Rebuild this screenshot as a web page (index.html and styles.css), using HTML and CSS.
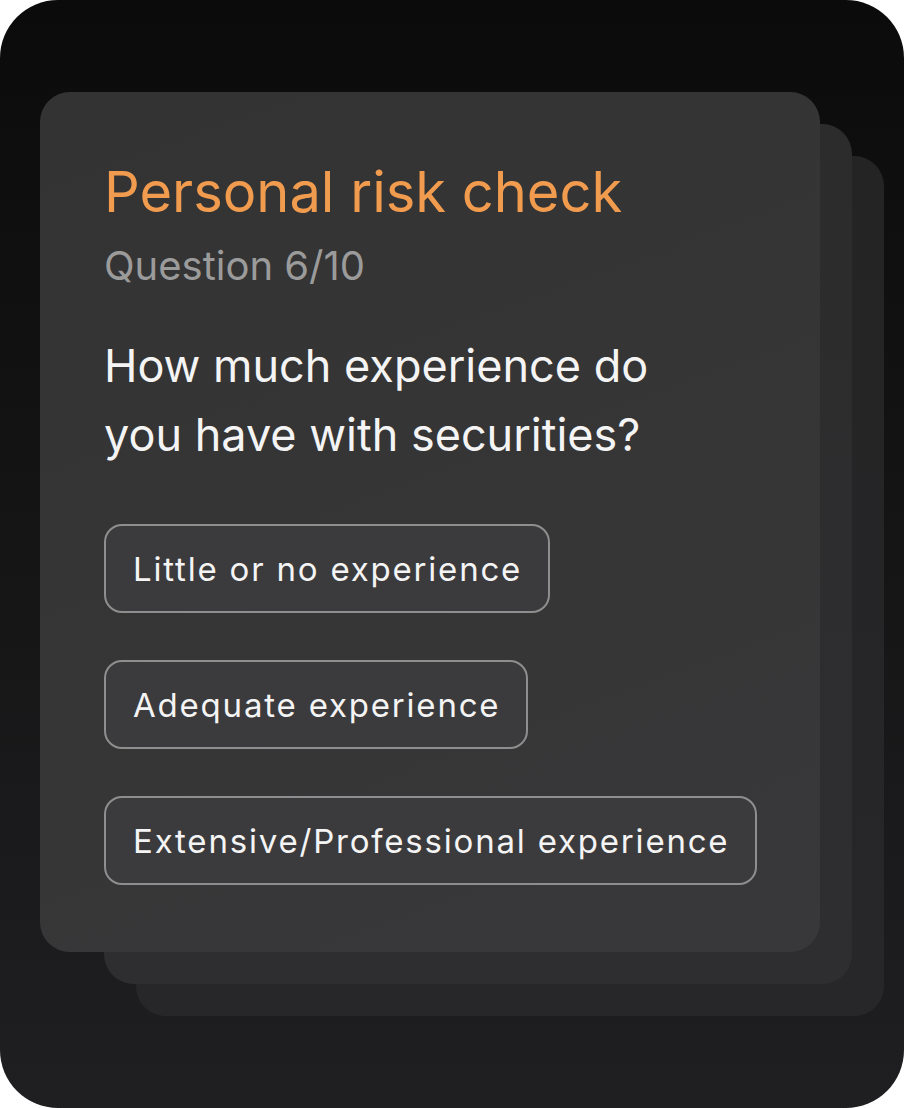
FILE: index.html
```html
<!DOCTYPE html>
<html lang="en">
<head>
<meta charset="utf-8">
<title>Personal risk check</title>
<link rel="stylesheet" href="styles.css">
</head>
<body>
<div class="frame">
  <div class="stack">
    <div class="card card-back card-back-2"></div>
    <div class="card card-back card-back-1"></div>
    <div class="card card-front">
      <h1 class="title">Personal risk check</h1>
      <p class="counter">Question 6/10</p>
      <p class="question">How much experience do<br>you have with securities?</p>
      <div class="options">
        <button class="option">Little or no experience</button>
        <button class="option">Adequate experience</button>
        <button class="option">Extensive/Professional experience</button>
      </div>
    </div>
  </div>
</div>
</body>
</html>
```

FILE: styles.css
```css
* { box-sizing: border-box; }
html, body { margin: 0; padding: 0; background: #ffffff; }
body { font-family: Inter, "Noto Sans", sans-serif; }

.frame {
  width: 904px;
  height: 1108px;
  border-radius: 58px;
  background: linear-gradient(180deg, #0b0b0b 0%, #141415 45%, #1f1f21 100%);
  padding: 92px 0 0 40px;
  overflow: hidden;
}

.stack {
  display: grid;
  grid-template-columns: max-content;
}

.card {
  grid-area: 1 / 1;
  border-radius: 30px;
}

.card-back { width: 748px; height: 860px; }
.card-back-1 { margin: 32px 0 0 64px; background: linear-gradient(180deg, #2c2c2d, #2e2e30); }
.card-back-2 { margin: 64px 0 0 96px; background: linear-gradient(180deg, #242425, #272729); }

.card-front {
  width: 780px;
  height: 860px;
  background: linear-gradient(160deg, #333333 0%, #363637 60%, #38383a 100%);
  padding: 67px 0 0 64px;
}

.title {
  margin: 0;
  font-size: 56px;
  line-height: 66px;
  font-weight: 400;
  color: #f19b4f;
}

.counter {
  margin: 17px 0 0;
  font-size: 40px;
  line-height: 48px;
  color: #9b9b9b;
}

.question {
  margin: 41px 0 0;
  font-size: 45px;
  line-height: 69px;
  color: #f4f4f4;
}

.options {
  margin-top: 55px;
  display: flex;
  flex-direction: column;
  align-items: flex-start;
  gap: 47px;
}

.option {
  font-family: Inter, "Noto Sans", sans-serif;
  font-size: 33px;
  letter-spacing: 1.8px;
  line-height: 40px;
  color: #f4f4f4;
  background: #3b3b3d;
  border: 2px solid #8e8e8e;
  border-radius: 18px;
  height: 89px;
  padding: 0 26px 0 27px;
  text-align: left;
}
```
